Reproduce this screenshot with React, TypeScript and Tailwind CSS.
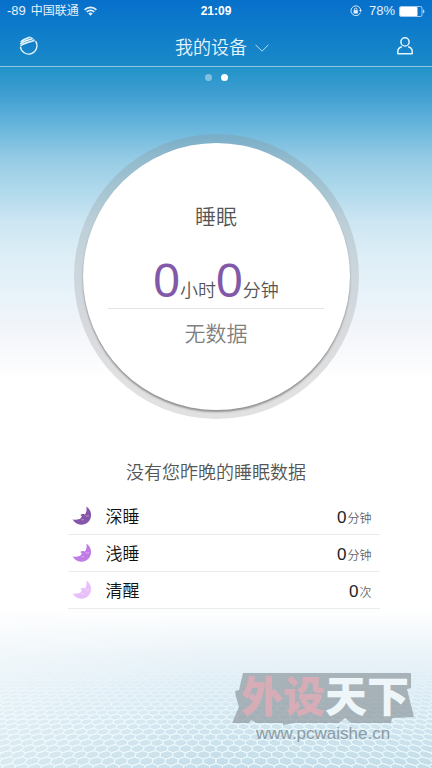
import React from 'react';

interface SleepStat {
  id: string;
  label: string;
  value: number;
  unit: string;
  moonClass: string;
}

const SLEEP_STATS: SleepStat[] = [
  { id: 'deep', label: '深睡', value: 0, unit: '分钟', moonClass: 'text-[#8455a8]' },
  { id: 'light', label: '浅睡', value: 0, unit: '分钟', moonClass: 'text-[#c07ce6]' },
  { id: 'awake', label: '清醒', value: 0, unit: '次', moonClass: 'text-[#e9bffa]' },
];

export default function App() {
  return (
    <div className="relative isolate flex min-h-screen flex-col overflow-hidden bg-white bg-[linear-gradient(to_bottom,#0670cb_0px,#1a8ac8_66px,#2293c9_68px,#3f9ed2_94px,#5fb1da_120px,#97cce5_160px,#b2daec_193px,#cde6f3_222px,#dfeff7_260px,#e9f3fa_300px,#f1f4f9_325px,#ffffff_380px)] font-['Liberation_Sans','Noto_Sans_CJK_SC',sans-serif]">
      <HoneycombFloor />
      <StatusBar />
      <NavBar />
      <PageDots />
      <main className="flex flex-col items-center">
        <SleepDial />
        <p className="mt-10 text-lg leading-7 font-[350] text-[#555]">没有您昨晚的睡眠数据</p>
        <StatList />
      </main>
      <Watermark />
    </div>
  );
}

function StatusBar() {
  return (
    <div className="flex h-[22px] items-center px-[7px] text-[13px] text-white/90">
      <div className="flex flex-1 items-center gap-[5px]">
        <span>-89</span>
        <span className="text-xs">中国联通</span>
        <svg className="h-[10px] w-[13px]" viewBox="0 0 13 10" fill="none" stroke="currentColor" strokeWidth="1.7">
          <path d="M0.6 3.8a8.3 8.3 0 0 1 11.8 0M2.7 6a5.4 5.4 0 0 1 7.6 0" />
          <path d="M6.5 9.8 4.3 7.6a3.1 3.1 0 0 1 4.4 0z" fill="currentColor" stroke="none" />
        </svg>
      </div>
      <span className="text-xs font-bold text-white">21:09</span>
      <div className="flex flex-1 items-center justify-end">
        <svg className="mr-[7px] h-3 w-3" viewBox="0 0 12 12" fill="none" stroke="currentColor">
          <path d="M10.4 7.6A4.9 4.9 0 1 1 10.7 5" strokeWidth="0.9" />
          <path d="M9.1 5h2.9l-1.4 1.9z" fill="currentColor" stroke="none" />
          <rect x="3.6" y="5.2" width="4.2" height="3.3" fill="currentColor" stroke="none" />
          <path d="M4.5 5.4V4.3a1.2 1.2 0 0 1 2.4 0v1.1" strokeWidth="0.9" />
        </svg>
        <span>78%</span>
        <svg className="ml-1 h-[11px] w-[26px]" viewBox="0 0 26 11">
          <rect x="0.5" y="0.5" width="22.5" height="10" rx="1.5" fill="none" stroke="currentColor" strokeOpacity="0.7" />
          <rect x="1" y="1" width="17.5" height="9" rx="1" fill="#fff" />
          <path d="M24.2 3.6c1.6 0.7 1.6 3.1 0 3.8z" fill="currentColor" />
        </svg>
      </div>
    </div>
  );
}

function NavBar() {
  return (
    <header className="flex h-[45px] items-center border-b border-white/50 px-[19px] pt-1 text-[#e6f5fb]">
      <div className="flex flex-1">
        <button type="button" aria-label="手环" className="p-0">
          <svg className="h-5 w-5" viewBox="0 0 20 20" fill="none" stroke="currentColor">
            <path d="M16.6 5.2A8.3 8.3 0 1 1 1.4 10.6" strokeWidth="1.3" />
            <path d="M1.6 10C4.4 7.4 9.6 6.2 15.4 4.6" strokeWidth="1.6" />
            <path d="M1.2 8C4 5.6 8.6 4 13.4 2.7" strokeWidth="1.7" />
            <path d="M1.8 5.9C4.2 3.8 7 2.3 10.6 1.2" strokeWidth="1.7" />
            <path d="M10.2 1c2.6 0.6 4.4 1.8 5.6 3.6" strokeWidth="1" />
          </svg>
        </button>
      </div>
      <button type="button" className="flex items-center gap-2 pt-1 pl-3 text-lg leading-6 font-[350]">
        我的设备
        <svg className="h-2 w-[14px] text-white/70" viewBox="0 0 14 8" fill="none" stroke="currentColor" strokeWidth="1">
          <path d="M0.5 0.7 7 7.2l6.5-6.5" />
        </svg>
      </button>
      <div className="flex flex-1 justify-end">
        <button type="button" aria-label="个人" className="p-0">
          <svg className="h-[18px] w-4" viewBox="0 0 16 18" fill="none" stroke="currentColor" strokeWidth="1.5">
            <circle cx="8" cy="4.9" r="4.1" />
            <path d="M4.9 9.8C2.3 10.5 0.8 12.4 0.8 14.4V16.8h14.4v-2.4c0-2-1.5-3.9-4.1-4.6" strokeLinejoin="round" />
          </svg>
        </button>
      </div>
    </header>
  );
}

function PageDots() {
  return (
    <div className="flex justify-center gap-[9px] pt-[7px]">
      <span className="size-[7px] rounded-full bg-white/40" />
      <span className="size-[7px] rounded-full bg-white" />
    </div>
  );
}

function SleepDial() {
  return (
    <section className="mt-[53px] size-[285px] rounded-full bg-[#888]/25 p-[9px]">
      <div className="flex size-full flex-col items-center rounded-full bg-white pt-[60px] shadow-[0_2px_2px_rgba(90,90,90,0.6)]">
        <h1 className="text-[21px] leading-7 font-[350] text-[#555]">睡眠</h1>
        <p className="mt-[30px] flex items-baseline text-lg leading-5 font-[350] text-[#555]">
          <span className="text-5xl leading-10 font-normal text-[#8259a8]">0</span>
          小时
          <span className="text-5xl leading-10 font-normal text-[#8259a8]">0</span>
          分钟
        </p>
        <p className="mt-[7px] w-[216px] border-t border-[#e4e4e4] pt-[11px] text-center text-[21px] leading-7 font-[350] text-[#808080]">
          无数据
        </p>
      </div>
    </section>
  );
}

function StatList() {
  return (
    <ul className="mt-[11px] ml-4 w-[72%]">
      {SLEEP_STATS.map((stat) => (
        <li key={stat.id} className="flex h-[37px] items-center border-b border-[#ebebeb] pr-2 pl-1">
          <Moon className={stat.moonClass} />
          <span className="ml-[13px] flex-1 pt-1 text-[17px] font-[350] text-[#111]">{stat.label}</span>
          <span className="flex items-baseline gap-px pt-1 text-xs font-[350] text-[#666]">
            <span className="text-[17px] font-normal text-[#222]">{stat.value}</span>
            {stat.unit}
          </span>
        </li>
      ))}
    </ul>
  );
}

function Moon({ className }: { className: string }) {
  return (
    <svg className={`h-5 w-5 ${className}`} viewBox="0 0 20 20">
      <path
        d="M14.3 0.6C17.6 2.6 19.4 6 19 10 18.5 15.2 14.2 19 9 18.7 5.1 18.4 2 16.2 0.5 13.2 3 14 6.2 14 8.6 12.6L9 11.5 10 10.6 8.3 9.1C9.4 8 11 7.7 12.6 8.4L13.6 7.6C14.6 5.6 14.9 3 14.3 0.6z"
        fill="currentColor"
      />
      <path d="M13.6 9.4c1 0.9 2.4 0.9 3.4 0.1M9.6 13.6c0.8 0.4 1.5 0.4 2.2 0" fill="none" stroke="#fff" strokeOpacity="0.55" strokeWidth="0.8" />
    </svg>
  );
}

function Watermark() {
  return (
    <div className="absolute right-[18px] bottom-[23px] w-[182px]">
      <svg className="absolute inset-x-0 top-0 -z-10 h-[52px] w-full text-[#8e989e]/70" viewBox="0 0 182 52">
        <path
          d="M11 0H179V15L175 16 182 44 160 45 159 50H119L113 45 107 50H62L51 52V50H24L19 47 17 50 0 50 7 34 4 24 3 18 7 17z"
          fill="currentColor"
        />
      </svg>
      <p className="flex h-[50px] items-center justify-center pl-1 text-[42px] leading-[50px] font-black text-[#d6acb7]">
        外设<span className="text-[#eef6fa]">天下</span>
      </p>
      <p className="pl-6 text-[17px] leading-[22px] text-[#8d9ba3]">www.pcwaishe.cn</p>
    </div>
  );
}

// Honeycomb plane seen in perspective; depth is counted in cell rows from the bottom edge.
const FLOOR_WIDTH = 432;
const FLOOR_HEIGHT = 160;
const HORIZON = -113;
const CELL = 13;
const DEPTH_STEP = 0.0255;

function project(x: number, row: number): string {
  const scale = 1 / (1 + DEPTH_STEP * row);
  const px = FLOOR_WIDTH / 2 + x * CELL * scale;
  const py = HORIZON + (FLOOR_HEIGHT - HORIZON) * scale;
  return `${px.toFixed(1)} ${py.toFixed(1)}`;
}

function buildHoneycomb(): string {
  const cells: string[] = [];
  for (let row = -2; row < 44; row++) {
    const shift = row % 2 === 0 ? 0 : 0.5;
    const half = Math.ceil((FLOOR_WIDTH / 2 / CELL) * (1 + DEPTH_STEP * row)) + 1;
    for (let col = -half; col <= half; col++) {
      const x = col + shift;
      const corners = [
        project(x, row - 0.67),
        project(x + 0.5, row - 0.33),
        project(x + 0.5, row + 0.33),
        project(x, row + 0.67),
        project(x - 0.5, row + 0.33),
        project(x - 0.5, row - 0.33),
      ];
      cells.push(`M${corners.join('L')}Z`);
    }
  }
  return cells.join('');
}

const HONEYCOMB = buildHoneycomb();

function HoneycombFloor() {
  return (
    <div className="absolute inset-x-0 bottom-0 -z-20 h-40 bg-linear-to-b from-white via-[#dcebf4] to-[#c3dde8]">
      <svg
        className="h-full w-full mask-[linear-gradient(to_bottom,transparent_25%,black_70%)]"
        viewBox="0 0 432 160"
        preserveAspectRatio="xMidYMax slice"
      >
        <path d={HONEYCOMB} fill="none" stroke="#eaf8fc" strokeWidth="1" />
      </svg>
      <div className="absolute inset-0 bg-linear-to-r from-white/35 via-transparent to-transparent" />
    </div>
  );
}
